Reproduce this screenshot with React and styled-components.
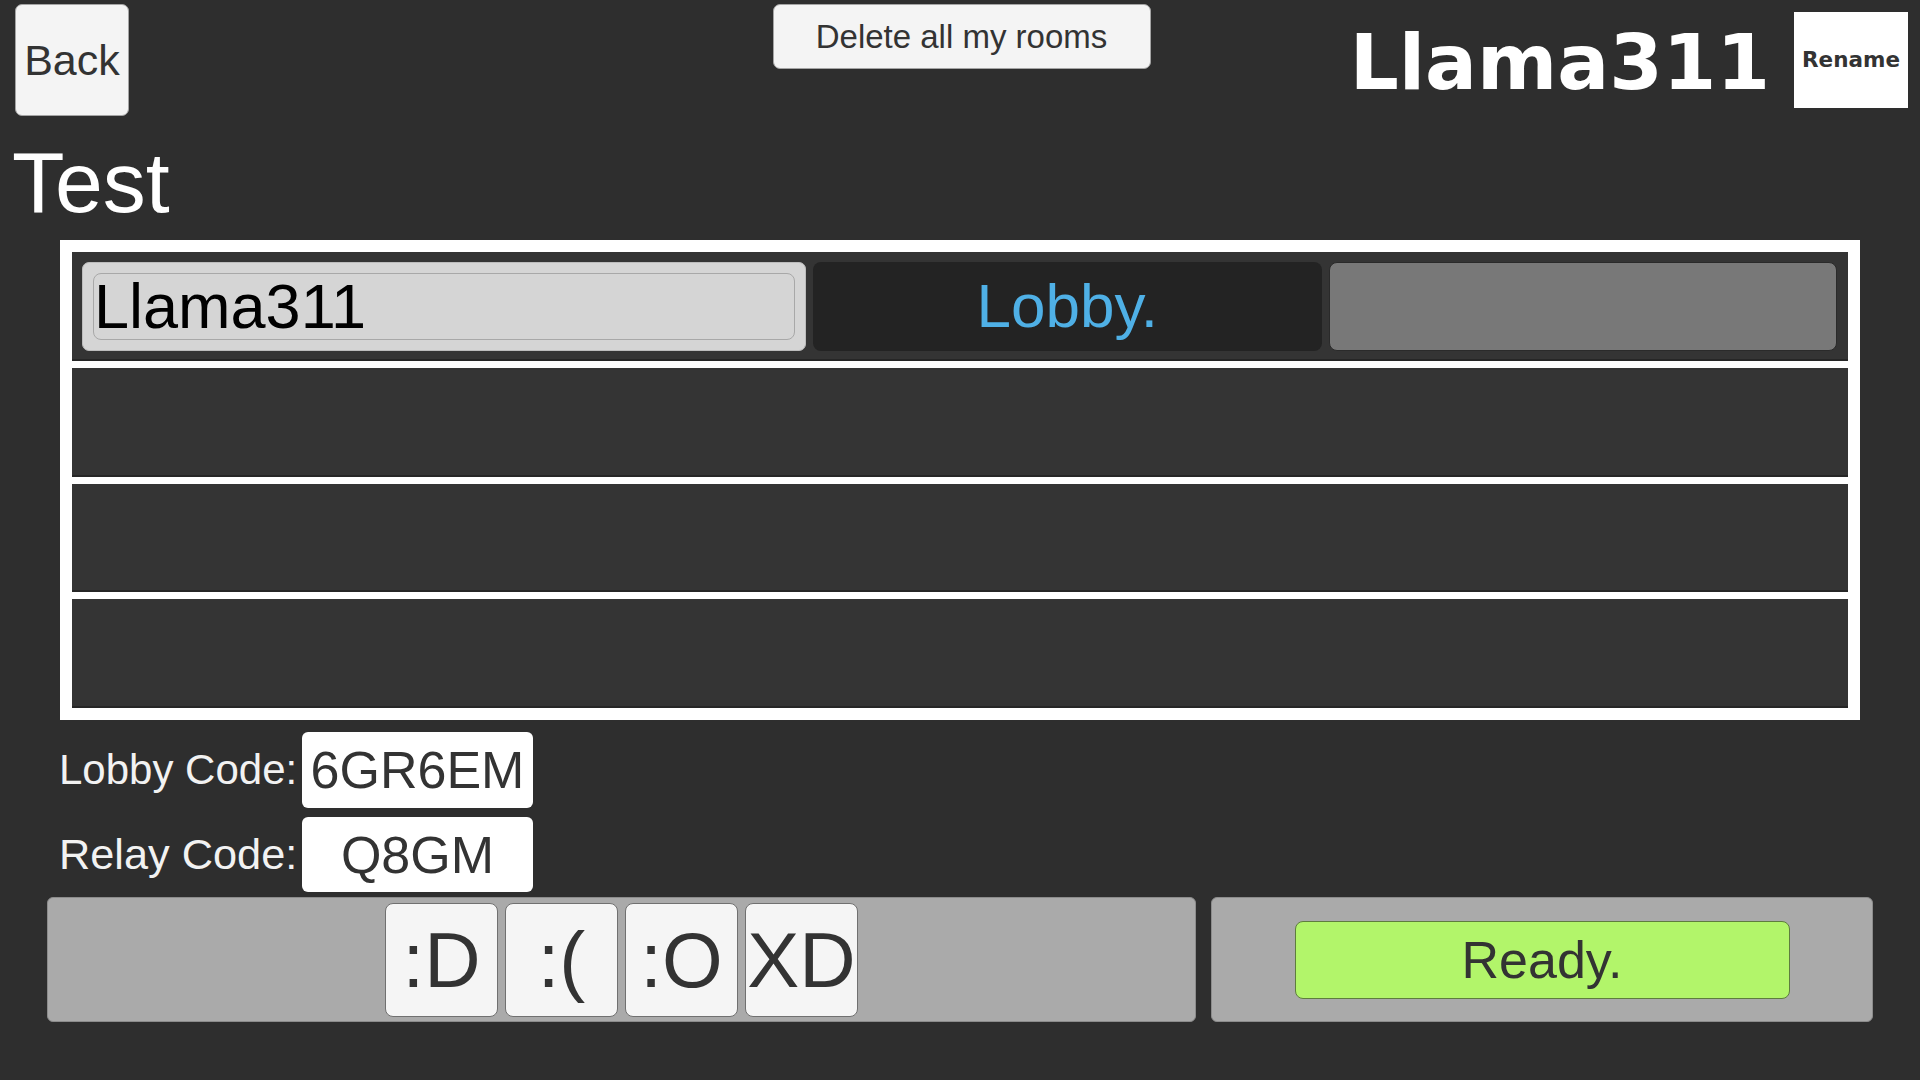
import React from 'react';
import styled, { createGlobalStyle } from 'styled-components';

const GlobalStyle = createGlobalStyle`
    * { box-sizing: border-box; }
    html, body {
        margin: 0;
        padding: 0;
        background: #2e2e2e;
    }
    body {
        font-family: "Liberation Sans", Arial, sans-serif;
    }
`;

const Screen = styled.div`
    width: 1920px;
    height: 1080px;
    background: #2e2e2e;
    overflow: hidden;
`;

const TopBar = styled.div`
    display: grid;
    grid-template-columns: 1fr auto 1fr;
    align-items: start;
    padding: 4px 12px 0 15px;
    height: 116px;
`;

const LightButton = styled.button`
    font-family: "Liberation Sans", Arial, sans-serif;
    background: #f4f4f4;
    color: #333;
    border: 1px solid #a4a4a4;
    border-radius: 7px;
    padding: 0;
    line-height: 1;
    display: flex;
    align-items: center;
    justify-content: center;
    cursor: pointer;
`;

const BackButton = styled(LightButton)`
    width: 114px;
    height: 112px;
    font-size: 43px;
    justify-self: start;
`;

const DeleteButton = styled(LightButton)`
    width: 378px;
    height: 65px;
    font-size: 33px;
`;

const UserGroup = styled.div`
    justify-self: end;
    display: flex;
    align-items: flex-start;
    gap: 24px;
    padding-top: 8px;
`;

const UserName = styled.div`
    font-family: "DejaVu Sans", sans-serif;
    font-weight: bold;
    font-size: 77px;
    line-height: 1;
    color: #fff;
    margin-top: 12px;
`;

const RenameButton = styled.button`
    width: 114px;
    height: 96px;
    background: #fff;
    border: none;
    border-radius: 0;
    padding: 0;
    font-family: "DejaVu Sans", sans-serif;
    font-weight: bold;
    font-size: 21.5px;
    line-height: 1;
    color: #333;
    cursor: pointer;
`;

const RoomTitle = styled.h1`
    margin: 23px 0 0 12px;
    font-family: "Liberation Sans", Arial, sans-serif;
    font-weight: normal;
    font-size: 86px;
    line-height: 1;
    color: #fff;
`;

const PlayerPanel = styled.div`
    margin: 15px 0 0 60px;
    width: 1800px;
    height: 480px;
    background: #fff;
    padding: 12px;
    display: flex;
    flex-direction: column;
    gap: 7px;
`;

const PlayerRow = styled.div`
    flex: 1;
    background: #343434;
    box-shadow: inset 0 -2px 0 #262626;
    padding: 10px 11px 10px 10px;
    display: grid;
    grid-template-columns: 724px 1fr 1fr;
    gap: 7px;
`;

const NameBox = styled.div`
    background: #d5d5d5;
    border: 1px solid #bcbcbc;
    border-radius: 7px;
    padding: 10px;
    display: flex;
`;

const NameInput = styled.div`
    flex: 1;
    border: 1px solid #a8a8a8;
    border-radius: 8px;
    padding-left: 0;
    display: flex;
    align-items: center;
    font-size: 63px;
    line-height: 1;
    color: #000;
`;

const StatusBox = styled.div`
    background: #232323;
    border-radius: 8px;
    display: flex;
    align-items: center;
    justify-content: center;
    font-size: 62px;
    line-height: 1;
    color: #4fb0e6;
`;

const EmptySlot = styled.div`
    background: #787878;
    border: 1px solid #2a2a2a;
    border-radius: 8px;
`;

const CodeList = styled.div`
    margin: 12px 0 0 59px;
    display: flex;
    flex-direction: column;
    gap: 9px;
`;

const CodeRow = styled.div`
    display: flex;
    align-items: center;
    gap: 5px;
`;

const CodeLabel = styled.span`
    font-size: ${(p) => p.size}px;
    line-height: 1;
    color: #f2f2f2;
    width: 238px;
    white-space: nowrap;
`;

const CodeValue = styled.div`
    width: 231px;
    height: ${(p) => p.h}px;
    background: #fff;
    border-radius: 6px;
    display: flex;
    align-items: center;
    justify-content: center;
    font-size: 52px;
    line-height: 1;
    color: #333;
`;

const BottomBar = styled.div`
    margin: 5px 0 0 47px;
    display: flex;
    gap: 15px;
    height: 125px;
`;

const Tray = styled.div`
    width: ${(p) => p.w}px;
    background: #aaaaaa;
    border: 1px solid #8c8c8c;
    border-radius: 6px;
    display: flex;
    align-items: center;
    justify-content: center;
    gap: 7px;
`;

const EmoteButton = styled.button`
    width: 113px;
    height: 114px;
    background: #f5f5f5;
    border: 1px solid #707070;
    border-radius: 8px;
    padding: 0;
    font-family: "Liberation Sans", Arial, sans-serif;
    font-size: 78px;
    line-height: 1;
    color: #333;
    display: flex;
    align-items: center;
    justify-content: center;
    cursor: pointer;
`;

const ReadyButton = styled.button`
    width: 495px;
    height: 78px;
    background: #b2f56a;
    border: 1px solid #5e7d3e;
    border-radius: 8px;
    padding: 0;
    font-family: "Liberation Sans", Arial, sans-serif;
    font-size: 52px;
    line-height: 1;
    color: #333;
    cursor: pointer;
`;

const emotes = [':D', ':(', ':O', 'XD'];

const App = () => {

    return (
        <Screen>
            <GlobalStyle />
            <TopBar>
                <BackButton>Back</BackButton>
                <DeleteButton>Delete all my rooms</DeleteButton>
                <UserGroup>
                    <UserName>Llama311</UserName>
                    <RenameButton>Rename</RenameButton>
                </UserGroup>
            </TopBar>

            <RoomTitle>Test</RoomTitle>

            <PlayerPanel>
                <PlayerRow>
                    <NameBox>
                        <NameInput>Llama311</NameInput>
                    </NameBox>
                    <StatusBox>Lobby.</StatusBox>
                    <EmptySlot />
                </PlayerRow>
                <PlayerRow />
                <PlayerRow />
                <PlayerRow />
            </PlayerPanel>

            <CodeList>
                <CodeRow>
                    <CodeLabel size={42}>Lobby Code:</CodeLabel>
                    <CodeValue h={76}>6GR6EM</CodeValue>
                </CodeRow>
                <CodeRow>
                    <CodeLabel size={43.3}>Relay Code:</CodeLabel>
                    <CodeValue h={75}>Q8GM</CodeValue>
                </CodeRow>
            </CodeList>

            <BottomBar>
                <Tray w={1149}>
                    {emotes.map((e) => (
                        <EmoteButton key={e}>{e}</EmoteButton>
                    ))}
                </Tray>
                <Tray w={662}>
                    <ReadyButton>Ready.</ReadyButton>
                </Tray>
            </BottomBar>
        </Screen>
    );

};

export default App;
